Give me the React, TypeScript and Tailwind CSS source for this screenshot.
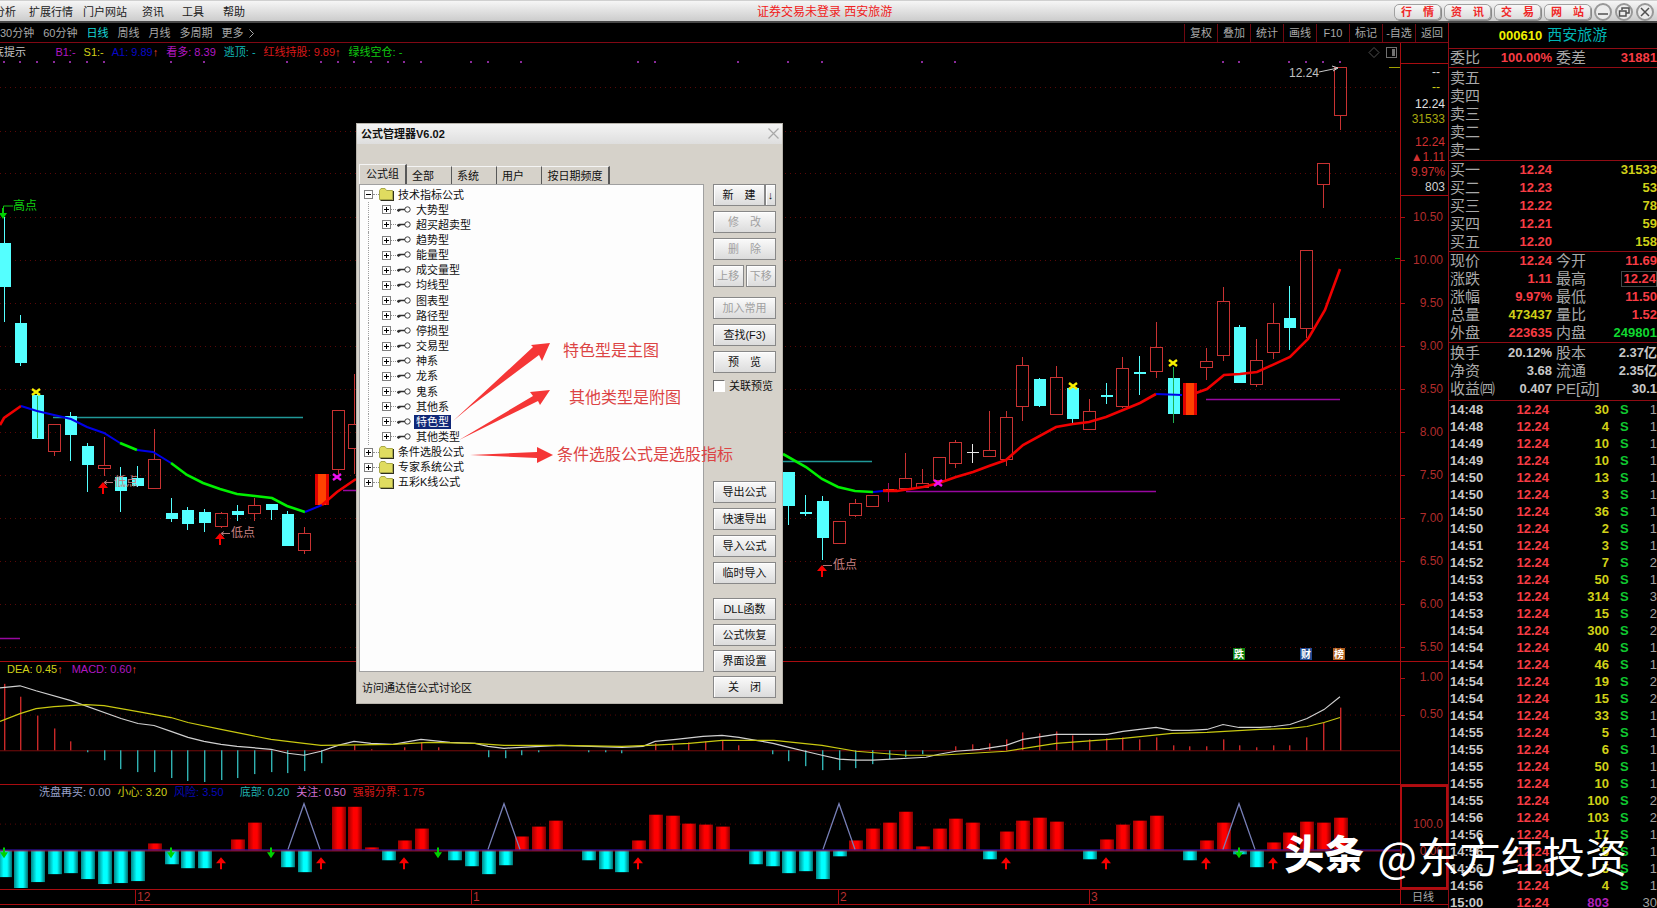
import React from "react";

const RED = "#c83232";
const CYAN = "#54ffff";
const X0 = 3.5;
const STEP = 16.7;
const xAt = (k: number) => Math.round(X0 + STEP * k);

type Kind = "up" | "down" | "cross" | "white" | "hot";
// index, kind, body top, body bottom, wick top, wick bottom
const candles: [number, Kind, number, number, number, number][] = [
  [0, "down", 243, 287, 217, 322], [1, "down", 323, 363, 315, 366], [2, "down", 395, 439, 392, 439],
  [3, "up", 424, 451, 424, 456], [4, "down", 416, 435, 412, 461], [5, "down", 446, 465, 443, 492],
  [6, "up", 465, 468, 437, 476], [7, "down", 477, 491, 467, 512], [8, "down", 478, 486, 466, 487],
  [9, "up", 459, 488, 429, 488], [10, "down", 513, 519, 498, 522], [11, "down", 510, 524, 507, 530],
  [12, "down", 512, 523, 509, 532], [13, "up", 513, 526, 512, 528], [14, "down", 511, 515, 505, 521],
  [15, "up", 505, 513, 498, 521], [16, "down", 504, 510, 504, 520], [17, "down", 514, 546, 511, 546],
  [18, "up", 533, 550, 527, 554], [19, "hot", 474, 505, 474, 506], [20, "up", 410, 469, 410, 474],
  [21, "up", 424, 448, 374, 474],
  [47, "down", 472, 506, 472, 525], [48, "cross", 512, 514, 495, 516], [49, "down", 501, 538, 496, 560],
  [50, "up", 521, 543, 521, 543], [51, "up", 503, 515, 499, 517], [52, "up", 495, 506, 495, 507],
  [53, "hot", 489, 492, 489, 492], [54, "up", 478, 488, 453, 488], [55, "up", 483, 487, 469, 487],
  [56, "up", 457, 480, 457, 480], [57, "up", 442, 463, 440, 468], [58, "white", 452, 453, 444, 463],
  [59, "up", 450, 456, 411, 457], [60, "up", 417, 459, 411, 466], [61, "up", 365, 406, 357, 421],
  [62, "down", 379, 406, 378, 407], [63, "up", 377, 414, 366, 414], [64, "down", 388, 419, 388, 423],
  [65, "up", 411, 429, 399, 429], [66, "cross", 395, 397, 383, 404], [67, "up", 368, 406, 357, 408],
  [68, "cross", 372, 374, 356, 395], [69, "up", 347, 371, 322, 378], [70, "down", 378, 414, 367, 423],
  [71, "hot", 383, 415, 381, 415], [72, "up", 361, 367, 348, 380], [73, "up", 301, 355, 287, 361],
  [74, "down", 327, 383, 325, 383], [75, "up", 360, 384, 339, 387], [76, "up", 323, 352, 303, 359],
  [77, "down", 318, 328, 286, 350], [78, "up", 250, 328, 250, 338], [79, "up", 163, 184, 163, 208],
  [80, "up", 67, 115, 67, 130],
];

const macd: [number, number][] = [
  [0, 683], [1, 696], [2, 715], [3, 728], [4, 741], [5, 752], [6, 760], [7, 769], [8, 772], [9, 772], [10, 778],
  [11, 781], [12, 782], [13, 780], [14, 778], [15, 774], [16, 772], [17, 773], [18, 771], [19, 763], [21, 745],
  [22, 749], [24, 747], [25, 742], [26, 747], [29, 757], [30, 758], [31, 755], [32, 752], [35, 752], [36, 752],
  [37, 753], [39, 743], [40, 745], [41, 742], [42, 741], [43, 740], [44, 745], [46, 754], [47, 761], [48, 766],
  [49, 770], [50, 770], [51, 768], [52, 764], [53, 759], [54, 757], [55, 754], [57, 746], [58, 744], [59, 743], [60, 739],
  [61, 732], [62, 733], [63, 731], [64, 735], [65, 739], [66, 738], [67, 737], [68, 739], [69, 737], [70, 745],
  [71, 746], [72, 746], [73, 739], [74, 745], [75, 747], [76, 745], [77, 745], [78, 737], [79, 722], [80, 707],
];

const energy: [number, number][] = [
  [0, 877], [1, 888], [2, 882], [3, 874], [4, 873], [5, 879], [6, 884], [7, 883], [8, 881], [9, 843], [10, 864],
  [11, 868], [12, 868], [14, 839], [15, 822], [17, 867], [18, 872], [20, 806], [21, 806], [22, 847], [23, 860],
  [24, 840], [25, 828], [27, 860], [28, 866], [29, 874], [30, 865], [31, 836], [32, 826], [33, 820], [35, 860],
  [36, 869], [37, 872], [38, 840], [39, 814], [40, 815], [41, 823], [42, 824], [43, 826], [45, 864], [46, 866],
  [47, 873], [48, 871], [49, 879], [50, 856], [51, 840], [52, 828], [53, 822], [54, 811], [55, 846], [56, 828],
  [57, 818], [58, 822], [59, 859], [60, 831], [61, 820], [62, 817], [63, 821], [65, 859], [66, 839], [67, 824],
  [68, 820], [69, 815], [71, 860], [72, 840], [73, 822], [74, 854], [75, 867], [76, 842], [77, 832], [78, 821],
  [79, 822], [80, 817],
];

const dots = [0, 1, 2, 3, 4, 5, 6, 10, 12, 17, 19, 20, 21, 22, 23, 24, 25, 28, 29, 31, 38, 39, 44, 47, 49, 55, 57, 73, 74, 77, 78, 79, 80];

const trend: [string, string][] = [
  ["#f00000", "0,425 4,418 21,406"],
  ["#0000e8", "21,406 37,411 71,419 87,427 104,433 120,443"],
  ["#00f000", "120,443 137,450"],
  ["#0000e8", "137,450 153,452 171,463"],
  ["#00f000", "171,463 187,475 203,483 220,489 237,494 255,496 272,498 287,506 305,512"],
  ["#0000e8", "305,512 322,505"],
  ["#f00000", "322,505 337,492 356,479"],
  ["#00f000", "783,454 806,467 822,479 838,487 855,491 873,492"],
  ["#0000e8", "873,492 883,491"],
  ["#f00000", "883,491 897,491 923,487 939,483 956,477 973,472 989,466 1006,460 1023,445 1056,427 1073,424 1089,422 1106,417 1140,403 1156,394"],
  ["#0000e8", "1156,394 1182,395"],
  ["#f00000", "1196,393 1207,389 1224,375 1240,374 1257,372 1290,357 1308,339 1325,310 1340,269"],
];

const dif =
  "0,687 20,685 36,690 71,700 121,718 138,723 154,725 171,731 188,737 204,741 221,744 237,746 271,749 288,753 304,755 321,751 338,745 354,741 371,743 393,744 421,739 450,742 475,743 488,746 504,748 521,747 560,745 622,747 643,746 655,741 676,739 703,736 722,735 739,737 756,740 773,743 789,747 805,751 822,755 839,759 856,760 873,760 926,757 939,754 956,751 980,749 1006,745 1023,739 1056,734 1107,734 1123,731 1156,727 1172,730 1189,730 1207,729 1223,724 1239,727 1260,727 1274,726 1290,724 1307,718 1324,709 1340,696";
const dea =
  "0,721 20,713 36,708 54,706 86,704 104,705 138,711 171,717 188,722 221,729 236,732 271,739 304,743 321,745 393,744 429,742 475,743 504,745 560,745 622,746 649,745 689,743 722,740 774,740 822,745 856,751 906,755 939,755 1006,751 1056,743 1123,738 1172,733 1207,732 1260,729 1290,728 1307,726 1324,722 1340,717";

function Grid({ y }: { y: number }) {
  return <line x1="0" x2="1400" y1={y + 0.5} y2={y + 0.5} stroke="#5a0808" strokeDasharray="1 4" />;
}

function Candle({ c }: { c: (typeof candles)[number] }) {
  const [k, kind, t, b, wt, wb] = c;
  const x = xAt(k);
  if (kind === "up")
    return (
      <g stroke={RED} fill="none">
        <rect x={x - 5.5} y={t + 0.5} width="12" height={b - t} />
        <path d={`M${x + 0.5} ${wt}V${t}M${x + 0.5} ${b}V${wb}`} />
      </g>
    );
  if (kind === "hot")
    return (
      <g>
        <rect x={x - 6} y={t} width="14" height={b - t} fill="#e00000" />
        <rect x={x - 3} y={t} width="8" height={b - t} fill="#ff4200" />
      </g>
    );
  const color = kind === "white" ? "#e8e8e8" : CYAN;
  return (
    <g fill={color}>
      <rect x={x - 5} y={t} width="12" height={b - t} />
      <rect x={x} y={wt} width="1" height={wb - wt} />
    </g>
  );
}

function Cross({ x, y, color }: { x: number; y: number; color: string }) {
  return <path d={`M${x - 4} ${y - 3}L${x + 4} ${y + 3}M${x + 4} ${y - 3}L${x - 4} ${y + 3}`} stroke={color} strokeWidth="2.4" />;
}

function RedUp({ x, y }: { x: number; y: number }) {
  return <path d={`M${x} ${y}l5 6h-4v6h-2v-6h-4z`} fill="#f80000" />;
}

function GreenDown({ x, y }: { x: number; y: number }) {
  return <path d={`M${x} ${y + 11}l4 -6h-3v-5h-2v5h-3z`} fill="#00d000" />;
}

const cjk = "font-['Liberation_Sans','Noto_Sans_CJK_SC',sans-serif]";

function MainChart() {
  return (
    <svg className="block h-full w-full" viewBox="0 43 1400 618" preserveAspectRatio="none" aria-label="K线图">
      {[87, 131, 173, 217, 260, 303, 346, 389, 432, 475, 518, 561, 604, 647].map((y) => <Grid key={y} y={y} />)}
      {dots.map((k) => <rect key={k} x={xAt(k) - 1} y="61" width="2" height="2" fill="#8a2a9a" />)}
      <path d="M53 417.5H303M783 461.5H872" stroke="#209898" strokeWidth="1.5" />
      <path d="M0 638.5H20M343 490.5H356M906 491.5H1156M1206 399.5H1340" stroke="#9808a0" strokeWidth="1.5" />
      {candles.map((c) => <Candle key={c[0]} c={c} />)}
      <path d="M37.5 396V438M1173.5 367V423" stroke="#20b050" />
      <path d="M888.5 483V502" stroke="#a01060" />
      {trend.map(([color, pts]) => (
        <polyline key={pts} points={pts} fill="none" stroke={color} strokeWidth={color === "#0000e8" ? 2 : 2.6} />
      ))}
      <Cross x={36} y={392} color="#f8f000" />
      <Cross x={1073} y={386} color="#f8f000" />
      <Cross x={1173} y={363} color="#f8f000" />
      <Cross x={337} y={477} color="#f010f0" />
      <Cross x={938} y={483} color="#f010f0" />
      <RedUp x={103} y={482} />
      <RedUp x={220} y={533} />
      <RedUp x={822} y={565} />
      <GreenDown x={3} y={208} />
      <path d="M3.5 212V206H13" stroke="#10c010" fill="none" />
      <path d="M104 482.5h9M221 533.5h9M823 565.5h9M107 480.500l-3 2l3 2M224 531.500l-3 2l3 2" stroke="#b07878" fill="none" />
      <g className={cjk} fontSize="12">
        <text x="13" y="210" fill="#10d010">高点</text>
        <text x="114" y="486" fill="#c88080">低点</text>
        <text x="231" y="537" fill="#c88080">低点</text>
        <text x="833" y="569" fill="#c88080">低点</text>
        <text x="1289" y="77" fill="#c0c0c0">12.24</text>
      </g>
      <path d="M1319 72L1338 68M1332 66L1338 68L1333 71" stroke="#c8c8c8" fill="none" />
      <path d="M1389 67.5H1400" stroke="#a0a000" />
      <path d="M1395 258.500H1400" stroke="#00a000" />
      <path d="M1374 47.500L1379 52.500L1374 57.500L1369 52.500Z" stroke="#505050" fill="none" />
      <rect x="1386.500" y="47.500" width="10" height="10" fill="none" stroke="#707070" />
      <rect x="1392" y="49" width="3" height="7" fill="#707070" />
      {[
        [1233, "跌", "#108010"],
        [1300, "财", "#204890"],
        [1333, "榜", "#b06020"],
      ].map(([x, t, c]) => (
        <g key={t}>
          <rect x={x} y="648" width="12" height="12" fill={c as string} />
          <text x={Number(x) + 1} y="658" className={cjk} fontSize="10" fontWeight="700" fill="#ffffff">{t}</text>
        </g>
      ))}
    </svg>
  );
}

function MacdChart() {
  return (
    <svg className="block h-full w-full" viewBox="0 661 1400 123" preserveAspectRatio="none" aria-label="MACD">
      <Grid y={714} />
      <path d="M0 750.5H1400" stroke="#780c0c" />
      {macd.map(([k, y]) => (
        <rect key={k} x={xAt(k)} y={Math.min(750, y)} width="1.4" height={Math.abs(750 - y)} fill={y < 750 ? "#c82828" : "#30b0b0"} />
      ))}
      <polyline points={dif} fill="none" stroke="#d0d0d0" strokeWidth="1.2" />
      <polyline points={dea} fill="none" stroke="#c8c810" strokeWidth="1.2" />
    </svg>
  );
}

function EnergyChart() {
  return (
    <svg className="block h-full w-full" viewBox="0 784 1400 105" preserveAspectRatio="none" aria-label="强弱分界">
      <defs>
        <linearGradient id="hot"><stop offset="0" stopColor="#a00000" /><stop offset=".4" stopColor="#ff0000" /><stop offset=".65" stopColor="#ff0000" /><stop offset="1" stopColor="#800000" /></linearGradient>
        <linearGradient id="cold"><stop offset="0" stopColor="#008888" /><stop offset=".4" stopColor="#00ffff" /><stop offset=".65" stopColor="#00ffff" /><stop offset="1" stopColor="#007070" /></linearGradient>
      </defs>
      <Grid y={823} />
      {energy.map(([k, y]) => (
        <rect key={k} x={xAt(k) - 6} y={Math.min(850, y)} width="14" height={Math.abs(850 - y)} fill={y < 850 ? "url(#hot)" : "url(#cold)"} />
      ))}
      <path d="M0 850.5H1400" stroke="#c01830" />
      <path d="M0 849.5H1400" stroke="#3010a0" />
      {[304, 504, 839, 1239].map((x) => (
        <path key={x} d={`M${x - 16} 849L${x} 803L${x + 16} 849`} stroke="#7880b8" strokeWidth="1.3" fill="none" />
      ))}
      {[13, 19, 24, 38, 60, 66, 72, 76].map((k) => <RedUp key={k} x={xAt(k)} y={857} />)}
      {[0, 10, 16, 26, 74].map((k) => <GreenDown key={k} x={xAt(k)} y={847} />)}
    </svg>
  );
}

function Legend({ items, className }: { items: [string, string, boolean?][]; className: string }) {
  return (
    <div className={`absolute top-0 left-0 flex items-center whitespace-pre text-[11px] ${className}`}>
      {items.map(([text, color, arrow]) => (
        <span key={text} className={color}>
          {text}
          {arrow && <span className="text-[#f04020]">↑</span>}
        </span>
      ))}
    </div>
  );
}

const white = "text-[#c8c8c8]";
const red = "text-[#f83c44]";
const yellow = "text-[#d0d018]";

const quotes: [string, string, string, string, string, string][] = [
  ["现价", "12.24", red, "今开", "11.69", red],
  ["涨跌", "1.11", red, "最高", "12.24", red],
  ["涨幅", "9.97%", red, "最低", "11.50", red],
  ["总量", "473437", yellow, "量比", "1.52", red],
  ["外盘", "223635", red, "内盘", "249801", "text-[#10d830]"],
];
const funda: [string, string, string, string, string, string][] = [
  ["换手", "20.12%", white, "股本", "2.37亿", white],
  ["净资", "3.68", white, "流通", "2.35亿", white],
  ["收益㈣", "0.407", white, "PE[动]", "30.1", white],
];
const bids = [["买一", "12.24", "31533"], ["买二", "12.23", "53"], ["买三", "12.22", "78"], ["买四", "12.21", "59"], ["买五", "12.20", "158"]];
const ticks: [string, string, string][] = [
  ["14:48", "30", "1"], ["14:48", "4", "1"], ["14:49", "10", "1"], ["14:49", "10", "1"], ["14:50", "13", "1"],
  ["14:50", "3", "1"], ["14:50", "36", "1"], ["14:50", "2", "1"], ["14:51", "3", "1"], ["14:52", "7", "2"],
  ["14:53", "50", "1"], ["14:53", "314", "3"], ["14:53", "15", "2"], ["14:54", "300", "2"], ["14:54", "40", "1"],
  ["14:54", "46", "1"], ["14:54", "19", "2"], ["14:54", "15", "2"], ["14:54", "33", "1"], ["14:55", "5", "1"],
  ["14:55", "6", "1"], ["14:55", "50", "1"], ["14:55", "10", "1"], ["14:55", "100", "2"], ["14:56", "103", "2"],
  ["14:56", "17", "1"], ["14:56", "5", "1"], ["14:56", "5", "1"], ["14:56", "4", "1"], ["15:00", "803", "30"],
];

function QuoteTable({ rows }: { rows: typeof quotes }) {
  return (
    <table className="w-full table-fixed border-collapse">
      <tbody>
        {rows.map(([a, b, bc, c, d, dc]) => (
          <tr key={a} className="h-[18px]">
            <th scope="row" className="w-[47px] whitespace-nowrap p-0 pl-px text-left text-[15px] leading-[18px] font-normal text-[#a8a8a8]">{a}</th>
            <td className={`w-[56px] p-0 text-right text-[13px] leading-[18px] font-bold ${bc}`}>{b}</td>
            <th scope="row" className="w-[45px] whitespace-nowrap p-0 pl-[4px] text-left text-[15px] leading-[18px] font-normal text-[#a8a8a8]">{c}</th>
            <td className={`p-0 text-right text-[13px] leading-[18px] font-bold ${dc}`}>
              {a === "涨跌" ? <span className="inline-block border border-[#404848] pl-px leading-[14px]">{d}</span> : d}
            </td>
          </tr>
        ))}
      </tbody>
    </table>
  );
}

function QuotePanel() {
  return (
    <aside className="w-[209px] shrink-0 overflow-hidden border-l border-[#900c14]">
      <h2 className="flex h-[26px] items-center justify-center gap-[5px] border-b border-[#900c14] text-[13px] font-bold text-[#f0f000]">
        000610 <span className="text-[15px] font-normal text-[#00b4b4]">西安旅游</span>
      </h2>
      <div className="border-b border-[#900c14]">
        <QuoteTable rows={[["委比", "100.00%", red, "委差", "31881", red]]} />
      </div>
      <ul className="border-b border-[#900c14] py-px pl-px text-[15px] leading-[18px] text-[#a8a8a8]">
        {["卖五", "卖四", "卖三", "卖二", "卖一"].map((t) => <li key={t}>{t}</li>)}
      </ul>
      <table className="w-full table-fixed border-collapse border-b border-[#900c14]">
        <tbody>
          {bids.map(([a, b, c]) => (
            <tr key={a} className="h-[18px]">
              <th scope="row" className="w-[47px] p-0 pl-px text-left text-[15px] leading-[18px] font-normal text-[#a8a8a8]">{a}</th>
              <td className={`w-[56px] p-0 text-right text-[13px] leading-[18px] font-bold ${red}`}>{b}</td>
              <td className={`p-0 text-right text-[13px] leading-[18px] font-bold ${yellow}`}>{c}</td>
            </tr>
          ))}
        </tbody>
      </table>
      <div className="border-b border-[#900c14]"><QuoteTable rows={quotes} /></div>
      <div className="border-b border-[#900c14] pt-px pb-[2px]"><QuoteTable rows={funda} /></div>
      <table className="w-full table-fixed border-collapse text-[13px] leading-[17px] font-bold">
        <tbody>
          {ticks.map(([t, v, n], i) => (
            <tr key={i} className="h-[17px]">
              <td className={`w-[46px] p-0 pl-px ${white}`}>{t}</td>
              <td className={`w-[54px] p-0 text-right ${red}`}>12.24</td>
              <td className={`w-[60px] p-0 text-right ${t === "15:00" ? "text-[#b020b8]" : yellow}`}>{v}</td>
              <td className="w-[22px] p-0 pl-[11px] text-[#10c830]">{t === "15:00" ? "" : "S"}</td>
              <td className="p-0 text-right font-normal text-[#a0a0a0]">{n}</td>
            </tr>
          ))}
        </tbody>
      </table>
    </aside>
  );
}

function TreeBox({ open }: { open?: boolean }) {
  return (
    <svg className="h-[9px] w-[9px] shrink-0" viewBox="0 0 9 9" aria-hidden="true">
      <rect x=".5" y=".5" width="8" height="8" fill="#fff" stroke="#808080" />
      <path d={open ? "M2 4.500H7" : "M2 4.500H7M4.500 2V7"} stroke="#000" />
    </svg>
  );
}

function Folder() {
  return (
    <svg className="h-[13px] w-[15px] shrink-0" viewBox="0 0 15 13" aria-hidden="true">
      <path d="M1.500 12.500H14.500V3" stroke="#303020" fill="none" strokeWidth="1.500" />
      <path d="M.5 11.500V2.500L2 .5H6L7.500 2.500H13.500V11.500Z" fill="#e0dc60" stroke="#a8a848" />
    </svg>
  );
}

function KeyGlyph() {
  return (
    <svg className="h-[8px] w-[14px] shrink-0" viewBox="0 0 14 8" aria-hidden="true">
      <circle cx="10.500" cy="3.500" r="2.700" fill="#fff" stroke="#404040" />
      <path d="M0 4.500L2 3.500H8M1 5.500L4 3.500" stroke="#303030" strokeWidth="1.400" fill="none" />
    </svg>
  );
}

const leaves = ["大势型", "超买超卖型", "趋势型", "能量型", "成交量型", "均线型", "图表型", "路径型", "停损型", "交易型", "神系", "龙系", "鬼系", "其他系", "特色型", "其他类型"];

function FolderRow({ name, open }: { name: string; open?: boolean }) {
  return (
    <li className="flex items-center pl-[4px]">
      <TreeBox open={open} />
      <span className="w-[6px] border-t border-dotted border-[#909090]" />
      <Folder />
      <span className="pl-[4px]">{name}</span>
    </li>
  );
}

const face = "border border-[#888888] bg-linear-to-b from-[#fafafa] to-[#dcdcdc] text-[11px] leading-[18px] whitespace-pre shadow-[inset_1px_1px_0_#ffffff] h-[22px]";

function Btn({ children, off, wide = true }: { children: React.ReactNode; off?: boolean; wide?: boolean }) {
  return (
    <button disabled={off} className={`${face} ${wide ? "w-[63px]" : "flex-1"} ${off ? "text-[#a0a0a0]" : "text-[#101010]"}`}>
      {children}
    </button>
  );
}

function FormulaDialog() {
  return (
    <div role="dialog" aria-label="公式管理器" className="absolute top-[123px] left-[356px] flex w-[427px] flex-col border border-[#b8b4ac] bg-[#d6d2ca] text-[#101010]">
      <header className="flex h-[20px] items-center justify-between bg-linear-to-b from-[#f4f4f4] to-[#dedede] pr-[3px] pb-px pl-[4px]">
        <h1 className="text-[11px] leading-[18px] font-bold">公式管理器V6.02</h1>
        <button aria-label="关闭窗口" className="text-[#a8a8a8]">
          <svg className="h-[11px] w-[11px]" viewBox="0 0 11 11"><path d="M.5 .5L10.500 10.500M10.500 .5L.5 10.500" stroke="currentColor" strokeWidth="1.200" /></svg>
        </button>
      </header>
      <div className="flex justify-between pt-[20px] pr-[6px] pl-[2px]">
        <div className="w-[345px]">
          <div role="tablist" className="flex h-[20px] items-end text-[11px] leading-[17px]">
            <button role="tab" aria-selected="true" className="h-[20px] w-[48px] border-t border-l border-[#f4f4f4] border-r-2 border-r-[#585858]">公式组</button>
            {["全部", "系统", "用户"].map((t) => (
              <button key={t} role="tab" aria-selected="false" className="h-[18px] w-[45px] border-t border-r border-t-[#f4f4f4] border-r-[#585858] pt-px pl-[5px] text-left">{t}</button>
            ))}
            <button role="tab" aria-selected="false" className="h-[18px] w-[68px] border-t border-r-2 border-t-[#f4f4f4] border-r-[#585858] pt-px">按日期频度</button>
          </div>
          <div className="h-[488px] border border-[#a0a0a0] bg-[#fdfdfd] pt-[2px]">
            <ul className="relative grid h-[303px] auto-rows-fr text-[11px] leading-[14px]">
              <FolderRow name="技术指标公式" open />
              {leaves.map((t) => (
                <li key={t} className="flex items-center pl-[8px]">
                  <span className="h-full w-[18px] border-l border-dotted border-[#a0a0a0]" aria-hidden="true" />
                  <span className="-ml-[4px] flex"><TreeBox /></span>
                  <span className="w-[5px] border-t border-dotted border-[#909090]" />
                  <span className="pl-px"><KeyGlyph /></span>
                  <span className={t === "特色型" ? "ml-[3px] bg-[#102878] px-[2px] text-white" : "ml-[5px]"}>{t}</span>
                </li>
              ))}
              <FolderRow name="条件选股公式" />
              <FolderRow name="专家系统公式" />
              <FolderRow name="五彩K线公式" />
            </ul>
          </div>
        </div>
        <div className="flex w-[63px] flex-col gap-[5px] pt-[20px]">
          <div className="flex"><button className={`${face} flex-1`}>新　建</button><button aria-label="更多新建" className={`${face} w-[11px]`}>↓</button></div>
          <Btn off>修　改</Btn>
          <Btn off>删　除</Btn>
          <div className="flex gap-[2px]"><Btn off wide={false}>上移</Btn><Btn off wide={false}>下移</Btn></div>
          <div className="flex flex-col gap-[5px] pt-[5px]">
            <Btn off>加入常用</Btn>
            <Btn>查找(F3)</Btn>
            <Btn>预　览</Btn>
          </div>
          <label className="flex h-[16px] items-center gap-[4px] text-[11px] leading-[14px] whitespace-nowrap">
            <input type="checkbox" className="h-[12px] w-[12px] shrink-0 appearance-none border border-[#707070] border-r-white border-b-white bg-white" />
            关联预览
          </label>
          <div className="flex flex-col gap-[5px] pt-[82px]">
            <Btn>导出公式</Btn>
            <Btn>快速导出</Btn>
            <Btn>导入公式</Btn>
            <Btn>临时导入</Btn>
          </div>
          <div className="flex flex-col gap-[4px] pt-[9px]">
            <Btn>DLL函数</Btn>
            <Btn>公式恢复</Btn>
            <Btn>界面设置</Btn>
            <Btn>关　闭</Btn>
          </div>
        </div>
      </div>
      <a href="#forum" className="-mt-[17px] mb-[8px] ml-[5px] self-start text-[11px] leading-[14px]">访问通达信公式讨论区</a>
      <svg className="pointer-events-none absolute top-0 left-0 h-[579px] w-[427px]" viewBox="356 123 427 579" fill="#f53636" aria-hidden="true">
        <path d="M452 420L532 346L530 344L549 342L541 360L538 354L470 405Z" />
        <path d="M458 439L532 395L529 391L549 389L539 404L537 400Z" />
        <path d="M469 454L536 451V446L552 454L536 462V457Z" />
      </svg>
      <p className="absolute top-[217px] left-[206px] text-[16px] leading-[20px] whitespace-nowrap text-[#dc4444]">特色型是主图</p>
      <p className="absolute top-[264px] left-[212px] text-[16px] leading-[20px] whitespace-nowrap text-[#dc4444]">其他类型是附图</p>
      <p className="absolute top-[321px] left-[200px] text-[16px] leading-[20px] whitespace-nowrap text-[#dc4444]">条件选股公式是选股指标</p>
    </div>
  );
}

function WindowBtn({ label, d }: { label: string; d: string }) {
  return (
    <button aria-label={label} className="flex h-[18px] w-[18px] items-center justify-center rounded-full border-2 border-[#989898] bg-[#ececec]">
      <svg className="h-[12px] w-[12px]" viewBox="0 0 12 12"><path d={d} stroke="#505050" strokeWidth="1.500" fill="none" /></svg>
    </button>
  );
}

export default function App() {
  return (
    <div className="relative flex h-screen w-full flex-col overflow-hidden bg-black font-['Liberation_Sans','Noto_Sans_CJK_SC',sans-serif]">
      <header className="relative flex h-[23px] shrink-0 items-center justify-between border-t border-b-2 border-t-[#d0d0d0] border-b-[#484848] bg-linear-to-b from-[#f6f6f6] to-[#cccccc] pt-[2px] pr-[3px]">
        <nav className="flex text-[11px] leading-[18px] text-[#202020]">
          <a href="#analysis" className="-ml-[6px] w-[35px]">分析</a>
          <a href="#market" className="w-[54px]">扩展行情</a>
          <a href="#portal" className="w-[59px]">门户网站</a>
          <a href="#news" className="w-[40px]">资讯</a>
          <a href="#tools" className="w-[41px]">工具</a>
          <a href="#help">帮助</a>
        </nav>
        <p className="absolute left-[757px] text-[12px] leading-[18px] text-[#f02020]">证券交易未登录 西安旅游</p>
        <div className="flex items-center gap-[3px]">
          {["行　情", "资　讯", "交　易", "网　站"].map((t) => (
            <button key={t} className="h-[16px] w-[47px] rounded-[5px] border border-[#a0a0a0] bg-linear-to-b from-[#f8f8f8] to-[#dcdcdc] text-[11px] leading-[13px] font-bold text-[#f02828] shadow-[1px_1px_0_#888888]">{t}</button>
          ))}
          <WindowBtn label="最小化" d="M1 8H11" />
          <WindowBtn label="还原" d="M4 4V2H11V7H8M1.500 5H8V10H1.500Z" />
          <WindowBtn label="关闭" d="M2 2L10 10M10 2L2 10" />
        </div>
      </header>

      <div className="flex min-h-0 flex-1">
        <main className="flex min-w-0 flex-1 flex-col overflow-hidden">
          <div className="flex h-[20px] shrink-0 items-center justify-between border-b border-[#800814] pt-px text-[11px] leading-[18px] text-[#a8a8a8]">
            <div className="flex gap-[9px]">
              <button>30分钟</button>
              <button>60分钟</button>
              <button className="text-[#18d8d8]">日线</button>
              <button>周线</button>
              <button>月线</button>
              <button>多周期</button>
              <button className="flex items-center gap-[5px]">
                更多
                <svg className="h-[9px] w-[5px]" viewBox="0 0 5 9"><path d="M.5 .5L4.500 4.500L.5 8.500" stroke="currentColor" fill="none" /></svg>
              </button>
            </div>
            <div className="flex h-full">
              {["复权", "叠加", "统计", "画线", "F10", "标记", "-自选", "返回"].map((t) => (
                <button key={t} className="w-[33px] border-l border-[#700810] whitespace-nowrap">{t}</button>
              ))}
            </div>
          </div>

          <section className="flex h-[619px] shrink-0 border-b border-[#a80c10]">
            <div className="relative min-w-0 flex-1">
              <MainChart />
              <Legend
                className="-ml-[7px] h-[19px] gap-[8px]"
                items={[
                  ["底提示     ", white], ["  B1:-", "text-[#b018c0]"], ["S1:-", yellow], ["A1: 9.89", "text-[#0808c8]", true],
                  ["看多: 8.39", "text-[#b018c0]"], ["逃顶: -", "text-[#10b8b8]"], ["红线持股: 9.89", "text-[#d81818]", true], ["绿线空仓: -", "text-[#10c810]"],
                ]}
              />
            </div>
            <div className="flex w-[48px] flex-col border-l border-[#a80c10] text-right text-[12px] leading-[15px] text-[#b02c2c]">
              <div className="mt-[20px] flex h-[135px] flex-col border-y border-[#a80c10] pt-px pr-[3px]">
                <span className="pr-[5px] text-[#d8d8d8]">--</span>
                <span className={`pr-[5px] ${yellow}`}>--</span>
                <span className="pt-[2px] text-[#e0e0e0]">12.24</span>
                <span className="text-[#a8a810]">31533</span>
                <span className="pt-[8px] text-[#d03030]">12.24</span>
                <span className="whitespace-nowrap text-[#d03030]">▲1.11</span>
                <span className="text-[#d03030]">9.97%</span>
                <span className="text-[#d0d0d0]">803</span>
              </div>
              {["10.50", "10.00", "9.50", "9.00", "8.50", "8.00", "7.50", "7.00", "6.50", "6.00", "5.50"].map((t) => (
                <div key={t} className="flex h-[43px] shrink-0 items-center justify-end pr-[5px]">
                  <span className="mr-auto w-[4px] border-t border-[#a80c10]" />
                  {t}
                </div>
              ))}
            </div>
          </section>

          <section className="flex h-[123px] shrink-0 border-b border-[#a80c10]">
            <div className="relative min-w-0 flex-1">
              <MacdChart />
              <Legend className="h-[14px] gap-[9px] pl-[7px]" items={[["DEA: 0.45", yellow, true], ["MACD: 0.60", "text-[#b018c0]", true]]} />
            </div>
            <div className="w-[48px] border-l border-[#a80c10] pt-[8px] text-right text-[12px] leading-[15px] text-[#b02c2c]">
              {["1.00", "0.50"].map((t) => (
                <div key={t} className="flex h-[37px] items-start justify-end pr-[5px]">
                  <span className="mt-[8px] mr-auto w-[4px] border-t border-[#a80c10]" />
                  {t}
                </div>
              ))}
            </div>
          </section>

          <section className="flex h-[105px] shrink-0 border-b border-[#a80c10]">
            <div className="relative min-w-0 flex-1">
              <EnergyChart />
              <Legend
                className="h-[14px] gap-[7px] pl-[39px]"
                items={[
                  ["洗盘再买: 0.00", "text-[#98a0c8]"], ["小心: 3.20", yellow], ["风险: 3.50", "text-[#0808b8]"],
                  ["   底部: 0.20", "text-[#20b0b0]"], ["关注: 0.50", "text-[#d070d0]"], ["强弱分界: 1.75", "text-[#d01818]"],
                ]}
              />
            </div>
            <div className="w-[48px] border-2 border-[#b00c10] pt-[30px] pr-[3px] text-right text-[12px] leading-[15px] text-[#b02c2c]">
              <div>100.0</div>
              <div className="pt-[12px]">0.00</div>
            </div>
          </section>

          <footer className="flex h-[15px] shrink-0 items-center border-b border-[#a80c10] text-[12px] leading-[14px] text-[#b83030]">
            <span className="w-[135px]" />
            <span className="w-[336px] border-l border-[#a80c10] pl-px">12</span>
            <span className="w-[367px] border-l border-[#a80c10] pl-px">1</span>
            <span className="w-[251px] border-l border-[#a80c10] pl-px">2</span>
            <span className="flex-1 border-l border-[#a80c10] pl-px">3</span>
            <span className="w-[48px] border-l border-[#a80c10] pl-[11px] text-[11px] text-[#a8a8a8]">日线</span>
          </footer>
        </main>
        <QuotePanel />
      </div>

      <FormulaDialog />

      <p className="pointer-events-none absolute right-[30px] bottom-[28px] flex items-center gap-[13px] text-[42px] leading-[50px] whitespace-nowrap text-white">
        <span className="text-[40px] font-black">头条</span>
        <span className="font-['Noto_Sans_CJK_SC',sans-serif]">@东方红投资</span>
      </p>
    </div>
  );
}
